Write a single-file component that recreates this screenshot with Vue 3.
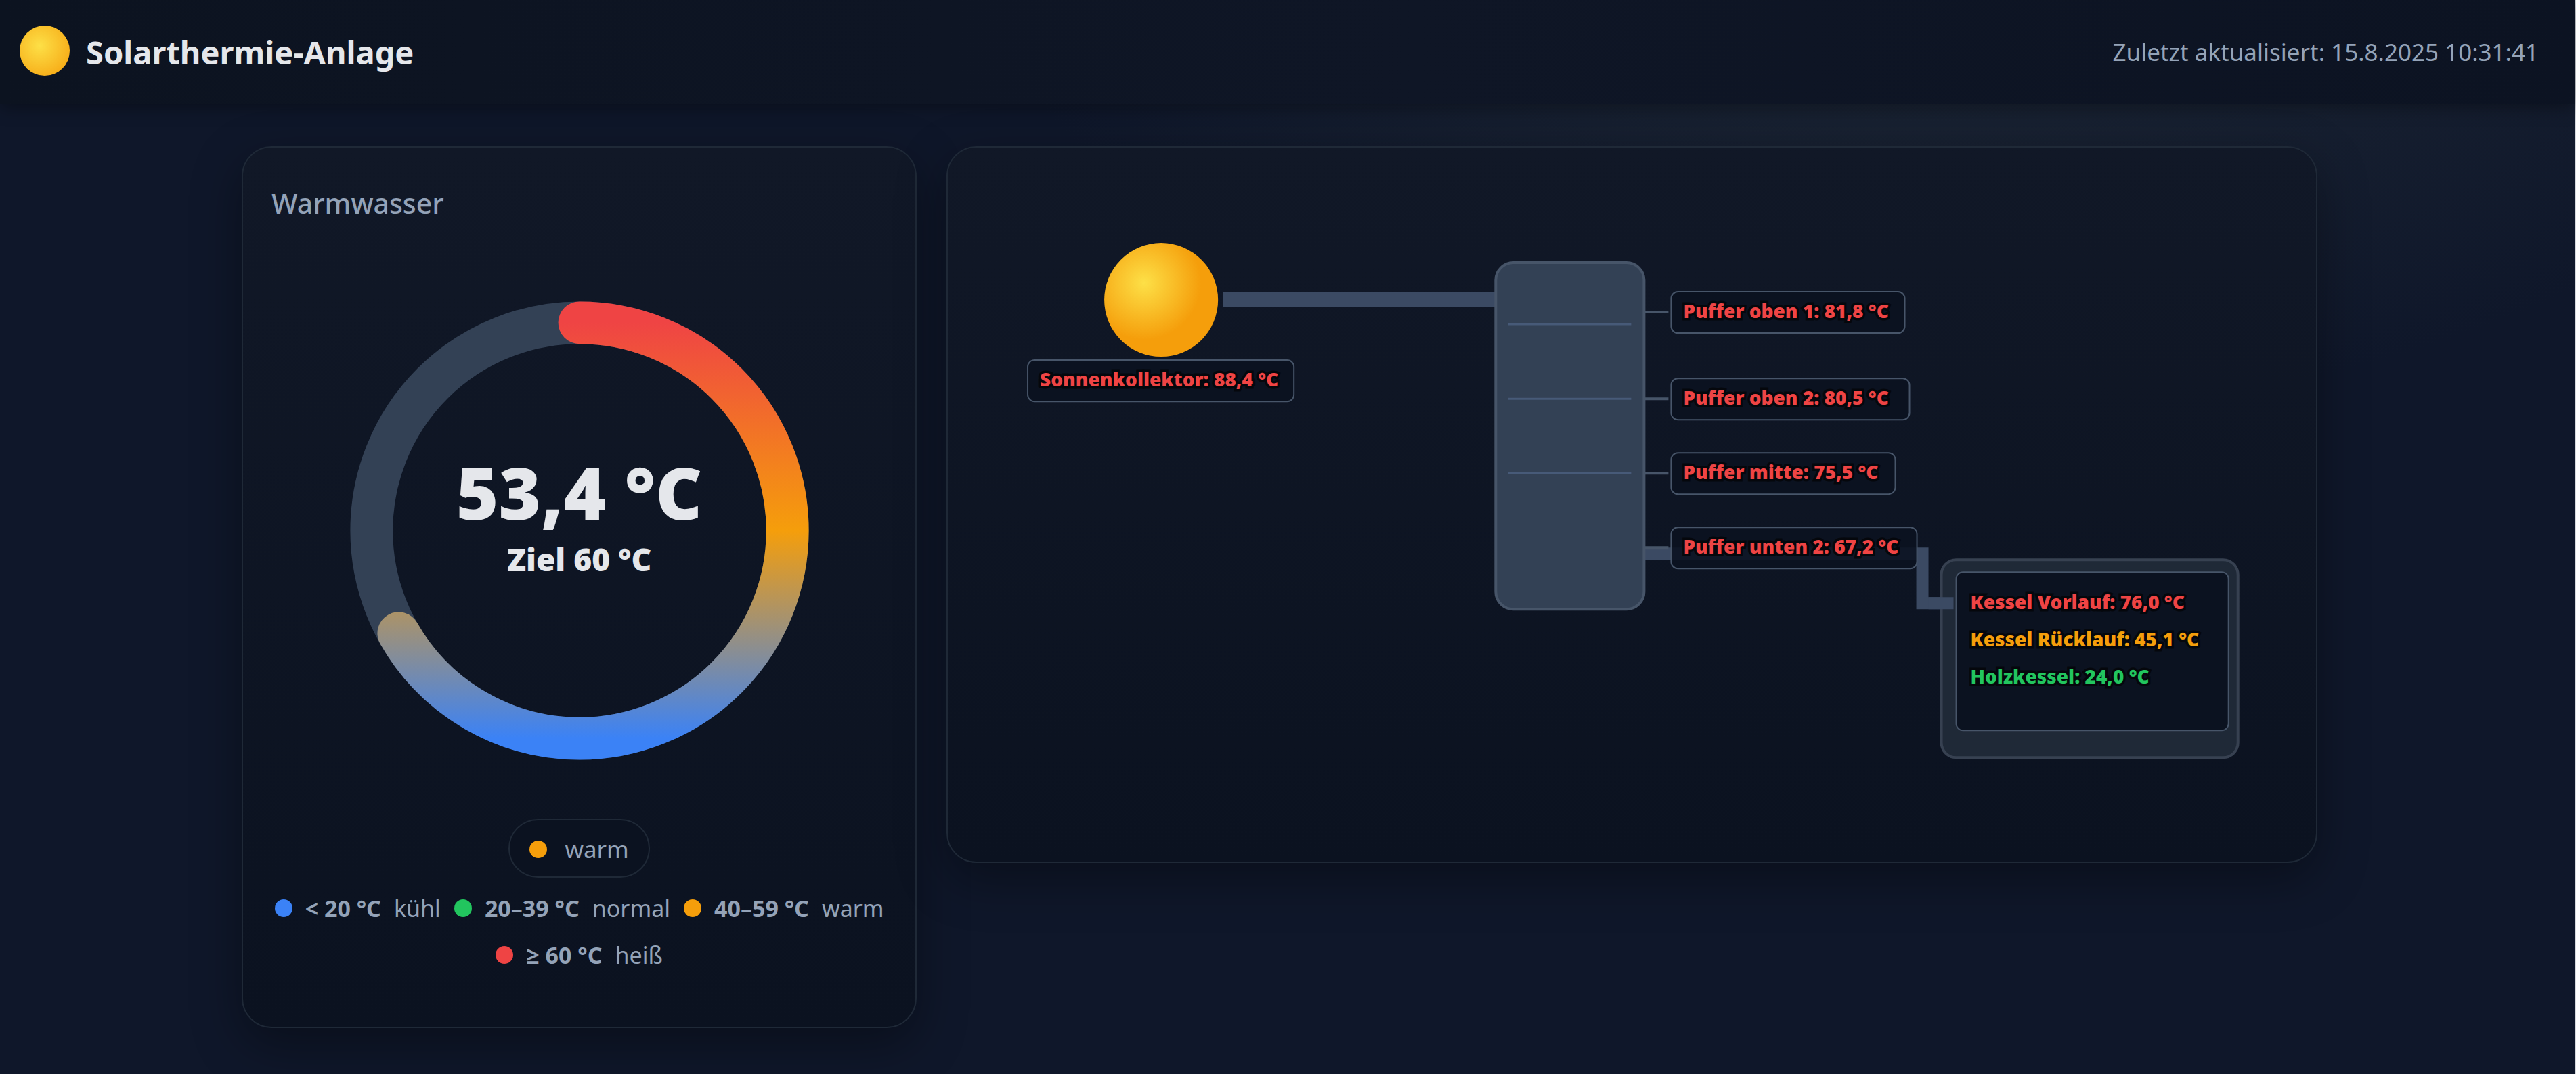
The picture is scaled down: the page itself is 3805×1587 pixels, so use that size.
<script setup>
const legend = [
  { range: '< 20 °C', name: 'kühl', tone: 'cool' },
  { range: '20–39 °C', name: 'normal', tone: 'normal' },
  { range: '40–59 °C', name: 'warm', tone: 'warm' },
  { range: '≥ 60 °C', name: 'heiß', tone: 'hot' },
]

const circumference = 2 * Math.PI * 88
const filled = circumference * (53.4 / 80)
const dash = `${filled} ${circumference}`

const sensors = [
  { text: 'Sonnenkollektor: 88,4 °C', x: 118, y: 314, w: 393 },
  { text: 'Puffer oben 1: 81,8 °C', x: 1068, y: 213, w: 345 },
  { text: 'Puffer oben 2: 80,5 °C', x: 1068, y: 341, w: 352 },
  { text: 'Puffer mitte: 75,5 °C', x: 1068, y: 451, w: 331 },
  { text: 'Puffer unten 2: 67,2 °C', x: 1068, y: 561, w: 363 },
]

const boiler = [
  { text: 'Kessel Vorlauf: 76,0 °C', y: 682, tone: 'hot' },
  { text: 'Kessel Rücklauf: 45,1 °C', y: 737, tone: 'warm' },
  { text: 'Holzkessel: 24,0 °C', y: 792, tone: 'normal' },
]
</script>

<template>
  <div class="page">
    <header class="topbar">
      <div class="brand">
        <span class="logo"></span>
        <h1>Solarthermie-Anlage</h1>
      </div>
      <p class="updated">Zuletzt aktualisiert: 15.8.2025 10:31:41</p>
    </header>

    <main class="grid">
      <section class="card tank-card">
        <h2>Warmwasser</h2>
        <div class="gauge">
          <svg viewBox="0 0 220 220" aria-hidden="true">
            <defs>
              <linearGradient id="ring" gradientUnits="userSpaceOnUse" x1="0" y1="22" x2="0" y2="198">
                <stop offset="0" stop-color="#ef4444" />
                <stop offset="0.5" stop-color="#f59e0b" />
                <stop offset="1" stop-color="#3b82f6" />
              </linearGradient>
            </defs>
            <circle class="track" cx="110" cy="110" r="88" />
            <path class="fill" d="M110 22a88 88 0 0 1 0 176a88 88 0 0 1 0-176" :stroke-dasharray="dash" />
          </svg>
          <div class="reading">
            <strong class="value">53,4 °C</strong>
            <span class="target">Ziel 60 °C</span>
          </div>
        </div>
        <div class="status"><span class="dot warm"></span>warm</div>
        <ul class="legend">
          <li v-for="item in legend" :key="item.name">
            <span class="dot" :class="item.tone"></span><b>{{ item.range }}</b><span>{{ item.name }}</span>
          </li>
        </ul>
      </section>

      <section class="card">
        <svg class="scheme" viewBox="0 0 2020 1055" role="img" aria-label="Anlagenschema">
          <defs>
            <radialGradient id="sun" cx="35%" cy="35%" r="50%">
              <stop offset="0" stop-color="#fde047" />
              <stop offset="1" stop-color="#f59e0b" />
            </radialGradient>
          </defs>
          <circle cx="315" cy="225" r="84" fill="url(#sun)" />
          <path class="pipe wide" d="M406 225H808" />
          <path class="pipe" d="M1028 600H1439V673H1485" />
          <rect class="tank" x="809" y="170" width="219" height="512" rx="26" />
          <path class="layer" d="M827 261H1009M827 371H1009M827 481H1009" />
          <path class="lead" d="M1029 243H1064M1029 371H1064M1029 481H1064M1029 591H1064" />
          <rect class="boiler" x="1467" y="609" width="438" height="292" rx="22" />
          <path class="pipe" d="M1448 673H1485" />
          <rect class="panel" x="1489" y="627" width="402" height="234" rx="10" />
          <g v-for="s in sensors" :key="s.text">
            <rect class="tag" :x="s.x" :y="s.y" :width="s.w" height="61" rx="10" />
            <text class="label hot" :x="s.x + 18" :y="s.y + 39">{{ s.text }}</text>
          </g>
          <text v-for="b in boiler" :key="b.text" class="label" :class="b.tone" x="1510" :y="b.y">{{ b.text }}</text>
        </svg>
      </section>
    </main>
  </div>
</template>

<style>
body {
  margin: 0;
  background: #0f172a;
}
</style>

<style scoped>
.page {
  box-sizing: border-box;
  min-height: 100vh;
  border-right: 1px solid #d8dbe0;
  color: #e5e7eb;
  font-family: "Noto Sans", "Open Sans", sans-serif;
  background: radial-gradient(2400px 1300px at 75% -10%, #1f2937 0%, transparent 60%), #0f172a;
}
.topbar {
  display: flex;
  align-items: center;
  justify-content: space-between;
  box-sizing: border-box;
  min-height: 154px;
  padding: 0 54px 4px 29px;
  background: linear-gradient(90deg, #0c1320, #0f1626 55%, #0c1322);
  box-shadow: 0 5px 24px rgba(0, 0, 0, 0.35);
}
.brand {
  display: flex;
  align-items: center;
  gap: 24px;
}
.logo {
  width: 74px;
  height: 74px;
  border-radius: 50%;
  background: radial-gradient(circle at 40% 40%, #fde047, #f59e0b);
}
h1 {
  margin: 4px 0 0;
  font-size: 47px;
  line-height: 64px;
  font-weight: 700;
}
.updated {
  margin: 4px 0 0;
  color: #94a3b8;
  font-size: 35px;
  line-height: 48px;
}
.grid {
  display: grid;
  grid-template-columns: minmax(0, 33fr) minmax(0, 67fr);
  gap: 44px;
  align-items: start;
  max-width: 3066px;
  margin: 0 auto;
  padding: 62px 24px 62px 0;
}
.card {
  border: 2px solid #1f2937;
  border-radius: 44px;
  background: linear-gradient(180deg, #111827, #0b1220);
  box-shadow: 0 24px 72px rgba(0, 0, 0, 0.35);
}
.tank-card {
  display: flex;
  flex-direction: column;
  align-items: center;
  padding: 52px 32px 80px;
}
h2 {
  align-self: stretch;
  margin: 0 10px 70px;
  color: #94a3b8;
  font-size: 41px;
  line-height: 60px;
  font-weight: 500;
}
.gauge {
  display: grid;
  place-items: center;
  width: 768px;
  max-width: 100%;
}
.gauge svg {
  grid-area: 1 / 1;
  display: block;
  width: 100%;
}
.track,
.fill {
  fill: none;
  stroke-width: 18;
}
.track {
  stroke: #334155;
}
.fill {
  stroke: url(#ring);
  stroke-linecap: round;
}
.reading {
  grid-area: 1 / 1;
  display: flex;
  flex-direction: column;
  align-items: center;
  padding-bottom: 50px;
  font-weight: 900;
}
.value {
  font-weight: 900;
  font-size: 107px;
  line-height: 134px;
}
.target {
  font-size: 46px;
  line-height: 64px;
}
.status {
  display: flex;
  align-items: center;
  gap: 26px;
  margin: 42px 0 19px;
  padding: 17px 29px 15px;
  border: 2px solid #1f2937;
  border-radius: 44px;
  color: #94a3b8;
  background: #0b1220;
  font-size: 35px;
  line-height: 51px;
}
.dot {
  flex: none;
  width: 26px;
  height: 26px;
  border-radius: 50%;
}
.dot.cool {
  background: #3b82f6;
}
.dot.normal {
  background: #22c55e;
}
.dot.warm {
  background: #f59e0b;
}
.dot.hot {
  background: #ef4444;
}
.legend {
  display: flex;
  flex-wrap: wrap;
  justify-content: center;
  gap: 17px 20px;
  margin: 0;
  padding: 0;
  list-style: none;
  color: #94a3b8;
  font-size: 34px;
  line-height: 52px;
}
.legend li {
  display: flex;
  align-items: center;
  gap: 19px;
}
.scheme {
  display: block;
  width: 100%;
}
.pipe {
  fill: none;
  stroke: #3b4a63;
  stroke-width: 18;
}
.pipe.wide {
  stroke-width: 22;
}
.tank {
  fill: #334155;
  stroke: #475569;
  stroke-width: 4;
}
.layer {
  stroke: #475a78;
  stroke-width: 3;
}
.lead {
  stroke: #475569;
  stroke-width: 4;
}
.boiler {
  fill: #1f2937;
  stroke: #374151;
  stroke-width: 4;
}
.panel,
.tag {
  fill: #0b1220;
  stroke: #475569;
  stroke-width: 2;
}
.tag {
  fill-opacity: 0.9;
}
.label {
  font-size: 28px;
  font-weight: 900;
  paint-order: stroke;
  stroke: #05070c;
  stroke-width: 7px;
}
.label.hot {
  fill: #ef4444;
}
.label.warm {
  fill: #f59e0b;
}
.label.normal {
  fill: #22c55e;
}
</style>
